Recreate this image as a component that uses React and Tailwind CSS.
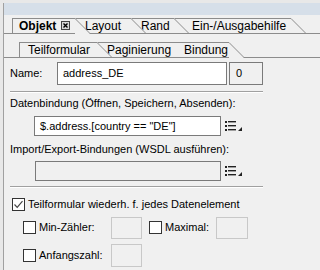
import React from "react";

function Slant({ h, active }) {
  return (
    <svg width={h} height={h + (active ? 1 : 0)} className="block shrink-0">
      <polygon points={`0,0 ${h},${h + (active ? 1 : 0)} 0,${h + (active ? 1 : 0)}`} fill="#f0f0f0" />
      <line x1="0" y1="0.5" x2={h} y2={h + 0.5} stroke="#8c8c8c" strokeWidth="1" />
    </svg>
  );
}

function Tab({ label, w, pl, h, first, active, z, bold, close }) {
  return (
    <div className={`relative flex shrink-0 ${z} ${first ? "" : "-ml-[15px]"} ${active ? "-mb-px" : ""}`}>
      <div
        className={`flex items-center bg-[#f0f0f0] border-t border-[#8c8c8c] text-[12px] ${first ? "border-l" : ""} ${w} ${pl} ${active ? h + " pb-px" : h} ${bold ? "font-bold" : ""}`}
      >
        <span className="leading-none">{label}</span>
        {close && (
          <span className="ml-[5px] flex h-[9px] w-[9px] items-center justify-center border border-[#444] bg-[#d8d8d8]">
            <svg width="7" height="7" viewBox="0 0 7 7">
              <path d="M1.5 1.5 L5.5 5.5 M5.5 1.5 L1.5 5.5" stroke="#000" strokeWidth="1.4" />
            </svg>
          </span>
        )}
      </div>
      <Slant h={15} active={active} />
    </div>
  );
}

function ListIcon() {
  return (
    <svg width="20" height="12" viewBox="0 0 20 12" className="block">
      <rect x="1" y="1" width="2" height="2" fill="#222" />
      <rect x="1" y="5" width="2" height="2" fill="#222" />
      <rect x="1" y="9" width="2" height="2" fill="#222" />
      <rect x="4" y="1" width="8" height="1.4" fill="#222" />
      <rect x="4" y="5" width="8" height="1.4" fill="#222" />
      <rect x="4" y="9" width="8" height="1.4" fill="#222" />
      <polygon points="14,11 18,11 18,7" fill="#222" />
    </svg>
  );
}

function Check({ checked }) {
  return (
    <span className="flex h-[13px] w-[13px] shrink-0 items-center justify-center border border-[#333] bg-white">
      {checked && (
        <svg width="11" height="11" viewBox="0 0 11 11">
          <path d="M1.5 5.5 L4.2 8.3 L9.5 2.2" fill="none" stroke="#444" strokeWidth="1.2" />
        </svg>
      )}
    </span>
  );
}

function Sep() {
  return <div className="ml-[6px] w-[253px] border-t border-[#a0a0a0] border-b border-b-white" />;
}

export default function App() {
  return (
    <div className="h-[270px] w-[320px] overflow-hidden bg-[#e8e8e8] font-['Liberation_Sans',Arial,sans-serif] text-[11px] text-black">
      <div className="h-[3px]" />
      <div className="ml-[3px] flex h-[267px] flex-col border-l border-[#a0a0a0] bg-[#f0f0f0]">
        <div className="h-[12px] bg-[#d6dfe9]" />
        <div className="mt-[3px] flex items-end border-b border-[#8c8c8c] pl-[8px]">
          <Tab label="Objekt" w="w-[63px]" pl="pl-[6px]" h="h-[15px]" first active bold close z="z-40" />
          <Tab label="Layout" w="w-[56px]" pl="pl-[10px]" h="h-[15px]" z="z-30" />
          <Tab label="Rand" w="w-[43px]" pl="pl-[10px]" h="h-[15px]" z="z-20" />
          <Tab label="Ein-/Ausgabehilfe" w="w-[117px]" pl="pl-[18px]" h="h-[15px]" z="z-10" />
        </div>
        <div className="mt-[8px] flex items-end border-b border-[#8c8c8c] pl-[15px]">
          <Tab label="Teilformular" w="w-[78px]" pl="pl-[8px]" h="h-[15px]" first z="z-30" />
          <Tab label="Paginierung" w="w-[76px]" pl="pl-[10px]" h="h-[15px]" z="z-20" />
          <Tab label="Bindung" w="w-[56px]" pl="pl-[11px]" h="h-[15px]" active z="z-40" />
        </div>

        <div className="flex flex-col">
          <div className="mt-[4px] flex items-center pl-[6px]">
            <span className="w-[47px]">Name:</span>
            <div className="flex h-[23px] w-[170px] items-center border border-[#7a7a7a] bg-white pl-[5px]">address_DE</div>
            <div className="ml-[2px] flex h-[23px] w-[34px] items-center border border-[#7a7a7a] bg-[#f0f0f0] pl-[6px]">0</div>
          </div>
          <div className="mt-[6px]">
            <Sep />
          </div>
          <div className="mt-[4px] pl-[6px] leading-[13px]">Datenbindung (Öffnen, Speichern, Absenden):</div>
          <div className="mt-[6px] flex items-center pl-[30px]">
            <div className="flex h-[20px] w-[187px] items-center border border-[#7a7a7a] bg-white pl-[5px]">$.address.[country == "DE"]</div>
            <div className="ml-[3px]">
              <ListIcon />
            </div>
          </div>
          <div className="mt-[7px] pl-[6px] leading-[13px]">Import/Export-Bindungen (WSDL ausführen):</div>
          <div className="mt-[5px] flex items-center pl-[31px]">
            <div className="h-[20px] w-[186px] border border-[#7a7a7a] bg-[#f0f0f0]" />
            <div className="ml-[3px]">
              <ListIcon />
            </div>
          </div>
          <div className="mt-[5px]">
            <Sep />
          </div>
          <div className="mt-[8px] flex items-center pl-[8px]">
            <Check checked />
            <span className="ml-[3px]">Teilformular wiederh. f. jedes Datenelement</span>
          </div>
          <div className="mt-[4px] flex items-center pl-[19px]">
            <Check />
            <span className="ml-[3px] w-[72px]">Min-Zähler:</span>
            <div className="h-[22px] w-[31px] border border-[#c8c8c8] bg-[#f0f0f0]" />
            <span className="ml-[7px]">
              <Check />
            </span>
            <span className="ml-[3px] w-[51px]">Maximal:</span>
            <div className="h-[22px] w-[32px] border border-[#c8c8c8] bg-[#f0f0f0]" />
          </div>
          <div className="mt-[5px] flex items-center pl-[19px]">
            <Check />
            <span className="ml-[3px] w-[72px]">Anfangszahl:</span>
            <div className="h-[23px] w-[31px] border border-[#c8c8c8] bg-[#f0f0f0]" />
          </div>
        </div>
      </div>
    </div>
  );
}
